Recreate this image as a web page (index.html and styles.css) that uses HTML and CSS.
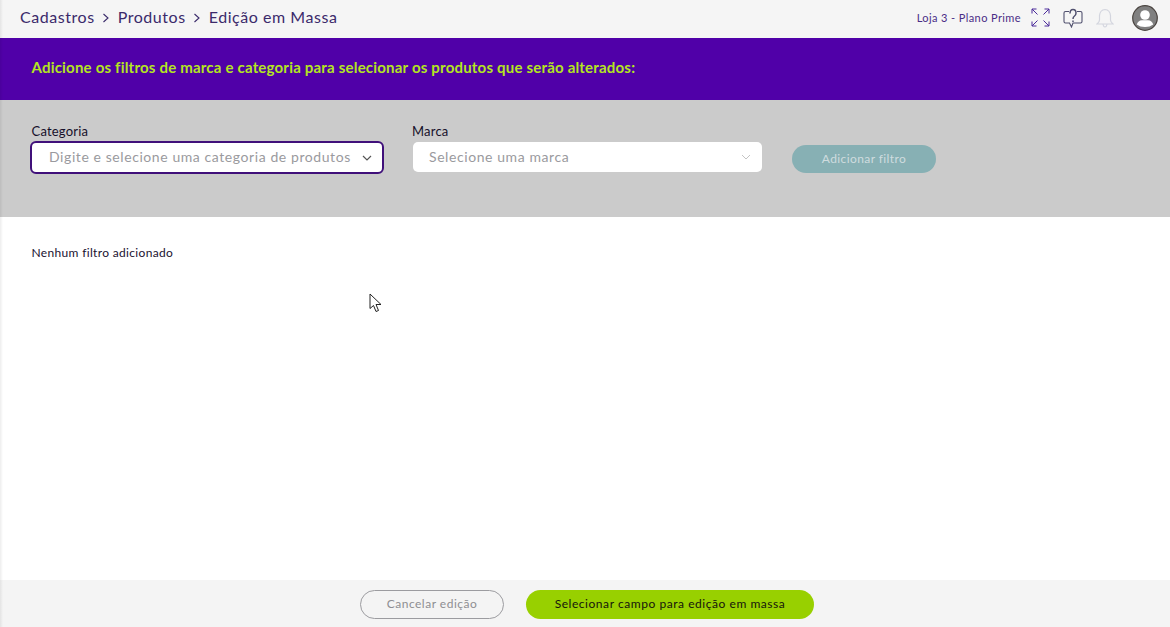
FILE: index.html
```html
<!DOCTYPE html>
<html lang="pt-BR">
<head>
<meta charset="utf-8">
<title>Edição em Massa</title>
<link rel="stylesheet" href="styles.css">
</head>
<body>
<div class="page">
  <header class="topbar">
    <nav class="crumbs">
      <span>Cadastros</span>
      <svg class="crumb-sep" width="8" height="12" viewBox="0 0 8 12"><path d="M1.500 2 6 6l-4.500 4" fill="none" stroke="#3a2a6a" stroke-width="1.100"/></svg>
      <span>Produtos</span>
      <svg class="crumb-sep" width="8" height="12" viewBox="0 0 8 12"><path d="M1.500 2 6 6l-4.500 4" fill="none" stroke="#3a2a6a" stroke-width="1.100"/></svg>
      <span>Edição em Massa</span>
    </nav>
    <div class="tools">
      <span class="store">Loja 3 - Plano Prime</span>
      <svg class="ic-expand" width="19" height="19" viewBox="0 0 19 19" fill="none" stroke="#4b2a9a" stroke-width="1"><path d="M1 5.500V1h4.500M1 1l5.500 5.500M13.500 1H18v4.500M18 1l-5.500 5.500M1 13.500V18h4.500M1 18l5.500-5.500M13.500 18H18v-4.500M18 18l-5.500-5.500"/></svg>
      <svg class="ic-help" width="20" height="20" viewBox="0 0 20 20" fill="none" stroke="#50506e" stroke-width="1.100"><path d="M6 3.500H2.500Q1 3.500 1 5V13.500Q1 15 2.500 15H6.500L8.500 19L10 15H17.500Q19 15 19 13.500V5Q19 3.500 17.500 3.500H14"/><path d="M7 5.500Q7 1.500 10 1.500T13 5Q13 7 11.500 8T10 11" stroke-width="1.500"/><path d="M10 12.500v1.500" stroke-width="1.500"/></svg>
      <svg class="ic-bell" width="18" height="20" viewBox="0 0 18 20" fill="none" stroke="#d3d5de" stroke-width="1.200"><path d="M9 1.500Q4 2 3.500 7.500V12Q3.500 14 1 16H17Q14.500 14 14.500 12V7.500Q14 2 9 1.500ZM7 16.500Q7.500 19 9 19T11 16.500"/></svg>
      <svg class="avatar" width="26" height="26" viewBox="0 0 26 26"><circle cx="13" cy="13" r="12.300" fill="#808080" stroke="#4a4440" stroke-width="1.200"/><circle cx="13" cy="10" r="4.800" fill="#fff"/><path d="M4.800 19.500Q6 15.500 10 15.300H16Q20 15.500 21.200 19.500Q18 22 13 22T4.800 19.500Z" fill="#fff"/></svg>
    </div>
  </header>

  <section class="banner">Adicione os filtros de marca e categoria para selecionar os produtos que serão alterados:</section>

  <section class="filters">
    <div class="field field-cat">
      <label class="field-label">Categoria</label>
      <div class="select select-focus">
        <span class="placeholder">Digite e selecione uma categoria de produtos</span>
        <svg width="10" height="6" viewBox="0 0 10 6"><path d="M1 1l4 4 4-4" fill="none" stroke="#555" stroke-width="1.200"/></svg>
      </div>
    </div>
    <div class="field field-brand">
      <label class="field-label">Marca</label>
      <div class="select">
        <span class="placeholder">Selecione uma marca</span>
        <svg width="10" height="6" viewBox="0 0 10 6"><path d="M1 1l4 4 4-4" fill="none" stroke="#c4c4c4" stroke-width="1"/></svg>
      </div>
    </div>
    <button class="btn-add">Adicionar filtro</button>
  </section>

  <main class="content">
    <p class="empty">Nenhum filtro adicionado</p>
    <svg class="cursor" width="14" height="20" viewBox="0 0 14 20"><path d="M1 1V15.500L4.500 12.500L7 18.500L9.500 17.500L7 11.500H12Z" fill="#fff" stroke="#222" stroke-width="1"/></svg>
  </main>

  <footer class="actions">
    <button class="btn-cancel">Cancelar edição</button>
    <button class="btn-primary">Selecionar campo para edição em massa</button>
  </footer>
</div>
</body>
</html>
```
FILE: styles.css
```css
* { box-sizing: border-box; }
html, body { margin: 0; height: 100%; }
body { font-family: "Lato", "Noto Sans", sans-serif; background: #fff; color: #111; }
.page { width: 1170px; height: 627px; display: flex; flex-direction: column; overflow: hidden; position: relative; }
.page::before { content: ""; position: absolute; left: 0; top: 0; bottom: 0; width: 3px; background: linear-gradient(to right, rgba(0,0,0,.07), rgba(0,0,0,0)); pointer-events: none; z-index: 2; }

.topbar { height: 38px; flex: none; background: #f5f5f5; display: flex; align-items: center; justify-content: space-between; padding: 0 12px 3px 20px; }
.crumbs { display: flex; align-items: center; gap: 7.500px; font-size: 16px; letter-spacing: .55px; color: #3b2a6b; margin-bottom: 2px; }
.crumb-sep { margin-top: 2px; }
.tools { display: flex; align-items: center; }
.store { font-size: 11px; letter-spacing: .4px; color: #4a2d86; margin-right: 10px; }
.ic-expand { margin-right: 13px; }
.ic-help { margin-right: 13px; }
.ic-bell { margin-right: 18px; }

.banner { height: 62px; flex: none; background: #5000a8; color: #b4e61e; font-size: 15px; font-weight: 700; letter-spacing: .2px; display: flex; align-items: center; padding: 0 31.500px 4px; }

.filters { height: 117px; flex: none; background: #cbcbcb; display: flex; align-items: flex-start; padding: 23px 0 0 30px; }
.field { display: flex; flex-direction: column; }
.field-cat { width: 354px; margin-right: 28px; }
.field-brand { width: 350px; margin-right: 30px; }
.field-label { font-size: 13px; line-height: 16px; padding-left: 1.500px; letter-spacing: .2px; color: #16102a; height: 18px; }
.field-brand .field-label { padding-left: 0; }
.select { height: 30px; margin-top: 1px; background: #fff; border-radius: 5px; display: flex; align-items: center; justify-content: space-between; padding: 0 11px 2px 16px; margin-left: 1px; }
.select-focus { height: 33px; margin-top: 0; margin-left: 0; border: 2px solid #40107a; padding: 0 10px 2px 17px; border-radius: 6px; }
.placeholder { font-size: 14px; letter-spacing: .58px; color: #9a9a9e; }
.select svg { margin-top: 2px; }
.btn-add { margin-top: 22px; width: 144px; height: 28px; border: 0; border-radius: 14px; background: #87b0b4; color: #cfdcdf; font: 12px "Lato", sans-serif; letter-spacing: .4px; padding: 0 0 2px; }

.content { flex: 1; position: relative; padding: 28px 31.500px; }
.empty { margin: 0; font-size: 12px; line-height: 16px; letter-spacing: .33px; color: #1a1230; }
.cursor { position: absolute; left: 369px; top: 76px; }

.actions { height: 47px; flex: none; background: #f4f4f4; display: flex; align-items: flex-start; justify-content: center; gap: 22px; padding: 10px 0 0 4px; }
.btn-cancel { width: 144px; height: 29px; border: 1px solid #9c9ca0; border-radius: 15px; background: transparent; color: #8e8e92; font: 12px "Lato", sans-serif; letter-spacing: .5px; padding: 0 0 2px; }
.btn-primary { width: 288px; height: 29px; border: 0; border-radius: 15px; background: #98d000; color: #15140c; font: 12px "Lato", sans-serif; letter-spacing: .55px; padding: 0 0 2px; }
```
